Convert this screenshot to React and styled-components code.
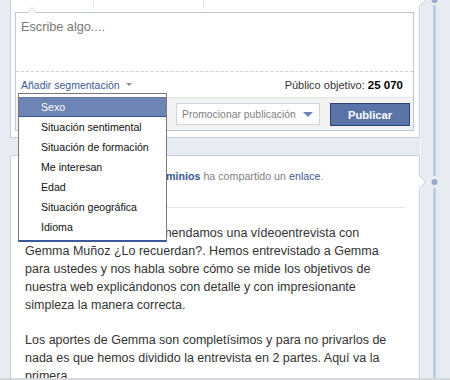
import React from "react";
import styled, { createGlobalStyle, css } from "styled-components";

const GlobalStyle = createGlobalStyle`
  html, body { margin: 0; padding: 0; }
  body {
    font-family: "Liberation Sans", Arial, sans-serif;
    background: #e7ebf2;
  }
`;

const FONT = `"Liberation Sans", Arial, sans-serif`;

const Page = styled.div`
  display: flex;
  align-items: flex-start;
  width: 450px;
  height: 380px;
  box-sizing: border-box;
  overflow: hidden;
  padding-left: 10px;
  background: #e7ebf2;
  border-bottom: 2px solid #d6d8dd;
  font-family: ${FONT};
`;

const MainCol = styled.div`
  width: 410px;
  flex: none;
  display: flex;
  flex-direction: column;
`;

const TimelineCol = styled.div`
  width: 30px;
  flex: none;
  height: 380px;
`;

const rightArrow = (top) => css`
  &::before,
  &::after {
    content: "";
    position: absolute;
    border-style: solid;
    border-color: transparent;
  }
  &::before {
    top: ${top - 7}px;
    right: -7px;
    border-width: 7px 0 7px 7px;
    border-left-color: #c4cde0;
  }
  &::after {
    top: ${top - 6}px;
    right: -6px;
    border-width: 6px 0 6px 6px;
    border-left-color: #fff;
  }
`;

const Panel = styled.section`
  position: relative;
  background: #fff;
  border: 1px solid #c4cde0;
  border-top: none;
  padding: 0 5px 6px 4px;
  ${rightArrow(0)}
`;

const TabStrip = styled.div`
  display: flex;
  height: 12px;
`;

const Tab = styled.div`
  width: ${(p) => p.$w}px;
  height: 9px;
  box-sizing: border-box;
  border-right: 1px solid #e1e4ea;
`;

const Composer = styled.div`
  position: relative;
  border: 1px solid #bdc7d8;
  background: #fff;
  &::before,
  &::after {
    content: "";
    position: absolute;
    border-style: solid;
    border-color: transparent;
  }
  &::before {
    left: 11px;
    top: -6px;
    border-width: 0 5px 6px 5px;
    border-bottom-color: #bdc7d8;
  }
  &::after {
    left: 12px;
    top: -5px;
    border-width: 0 4px 5px 4px;
    border-bottom-color: #fff;
  }
`;

const TextArea = styled.div`
  height: 59px;
  box-sizing: border-box;
  padding: 6px 5px;
  border-bottom: 1px dashed #c9d0dc;
  color: #777;
  font-size: 12.7px;
  line-height: 16px;
`;

const SegRow = styled.div`
  position: relative;
  display: flex;
  justify-content: space-between;
  align-items: center;
  height: 25px;
  padding: 0 10px 0 5px;
`;

const SegLink = styled.span`
  display: inline-flex;
  align-items: center;
  color: #3b5998;
  font-size: 10.5px;
`;

const SmallCaret = styled.span`
  margin-left: 6px;
  width: 0;
  height: 0;
  border-style: solid;
  border-width: 3px 3px 0 3px;
  border-color: #8f8f8f transparent transparent transparent;
`;

const Audience = styled.span`
  color: #333;
  font-size: 11px;
  b {
    color: #000;
    font-weight: bold;
    font-size: 11.5px;
  }
`;

const BottomBar = styled.div`
  display: flex;
  justify-content: flex-end;
  align-items: flex-start;
  gap: 10px;
  border-top: 1px solid #e5e5e5;
  background: #f2f2f2;
  padding: 5px 3px 4px;
`;

const Select = styled.div`
  width: 144px;
  height: 22px;
  box-sizing: border-box;
  display: flex;
  align-items: center;
  justify-content: space-between;
  padding: 0 6px 0 5px;
  background: #fff;
  border: 1px solid #cfd5df;
  color: #808080;
  font-size: 10.4px;
`;

const BlueCaret = styled.span`
  width: 0;
  height: 0;
  border-style: solid;
  border-width: 5px 5px 0 5px;
  border-color: #6d84b4 transparent transparent transparent;
`;

const PublishButton = styled.button`
  width: 80px;
  height: 23px;
  box-sizing: border-box;
  margin: 0;
  padding: 0;
  background: #5b74a8;
  border: 1px solid #29447e;
  color: #fff;
  font-family: ${FONT};
  font-weight: bold;
  font-size: 11.2px;
`;

const Menu = styled.ul`
  position: absolute;
  top: 21px;
  left: 2px;
  z-index: 10;
  width: 149px;
  box-sizing: border-box;
  margin: 0;
  padding: 3px 0;
  list-style: none;
  background: #fff;
  border: 1px solid #777;
  border-bottom: 2px solid #3b5998;
`;

const MenuItem = styled.li`
  height: 20px;
  box-sizing: border-box;
  padding-left: 22px;
  line-height: 18px;
  border-top: 1px solid transparent;
  border-bottom: 1px solid transparent;
  font-size: 10.6px;
  color: #111;
  white-space: nowrap;
  ${(p) =>
    p.$active &&
    css`
      background: #6d84b4;
      border-top-color: #5f77aa;
      border-bottom-color: #3b5998;
      color: #fff;
    `}
`;

const Card = styled.article`
  position: relative;
  margin-top: 17px;
  background: #fff;
  border: 1px solid #c4cde0;
  border-radius: 3px;
  padding: 10px 14px 0;
  ${rightArrow(26)}
`;

const Header = styled.div`
  display: flex;
  gap: 6px;
  height: 40px;
`;

const Avatar = styled.div`
  width: 40px;
  height: 40px;
  flex: none;
  background: #dfe3ee;
`;

const HeaderText = styled.div`
  padding-top: 3px;
  font-size: 10.7px;
  line-height: 15px;
  color: #7f7f7f;
  white-space: nowrap;
`;

const NameLink = styled.span`
  color: #3b5998;
  font-weight: bold;
`;

const Link = styled.span`
  color: #3b5998;
`;

const DateLine = styled.div`
  color: #999;
`;

const Separator = styled.div`
  margin-top: 1px;
  border-top: 1px solid #e5e5e5;
`;

const Body = styled.div`
  margin-top: 16px;
  color: #333;
  font-size: 12.5px;
  line-height: 18px;
  white-space: nowrap;
  p {
    margin: 0 0 17px;
  }
`;

const segOptions = [
  "Sexo",
  "Situación sentimental",
  "Situación de formación",
  "Me interesan",
  "Edad",
  "Situación geográfica",
  "Idioma",
];

function TimelineSpine() {
  return (
    <svg width="30" height="380" viewBox="0 0 30 380">
      <rect x="0" y="0" width="1" height="380" fill="#f3f5f9" />
      <rect x="13" y="5" width="3" height="171" fill="#c3cde2" />
      <circle cx="14.5" cy="0" r="3" fill="#9aa9cb" />
      <circle cx="14.5" cy="182" r="3" fill="#9aa9cb" />
      <rect x="13" y="188" width="3" height="192" fill="#c3cde2" />
    </svg>
  );
}

export default function App() {
  return (
    <>
      <GlobalStyle />
      <Page>
        <MainCol>
          <Panel>
            <TabStrip>
              <Tab $w={79} />
              <Tab $w={110} />
            </TabStrip>
            <Composer>
              <TextArea>Escribe algo....</TextArea>
              <SegRow>
                <SegLink>
                  Añadir segmentación
                  <SmallCaret />
                </SegLink>
                <Audience>
                  Público objetivo: <b>25 070</b>
                </Audience>
                <Menu>
                  {segOptions.map((o, i) => (
                    <MenuItem key={o} $active={i === 0}>
                      {o}
                    </MenuItem>
                  ))}
                </Menu>
              </SegRow>
              <BottomBar>
                <Select>
                  Promocionar publicación
                  <BlueCaret />
                </Select>
                <PublishButton>Publicar</PublishButton>
              </BottomBar>
            </Composer>
          </Panel>
          <Card>
            <Header>
              <Avatar />
              <HeaderText>
                <NameLink>Blog Nominalia Dominios</NameLink> ha compartido un{" "}
                <Link>enlace</Link>.
                <DateLine>hace 2 horas</DateLine>
              </HeaderText>
            </Header>
            <Separator />
            <Body>
              <p>
                En esta ocasión les recomendamos una vídeoentrevista con
                <br />
                Gemma Muñoz ¿Lo recuerdan?. Hemos entrevistado a Gemma
                <br />
                para ustedes y nos habla sobre cómo se mide los objetivos de
                <br />
                nuestra web explicándonos con detalle y con impresionante
                <br />
                simpleza la manera correcta.
              </p>
              <p>
                Los aportes de Gemma son completísimos y para no privarlos de
                <br />
                nada es que hemos dividido la entrevista en 2 partes. Aquí va la
                <br />
                primera.
              </p>
            </Body>
          </Card>
        </MainCol>
        <TimelineCol>
          <TimelineSpine />
        </TimelineCol>
      </Page>
    </>
  );
}
